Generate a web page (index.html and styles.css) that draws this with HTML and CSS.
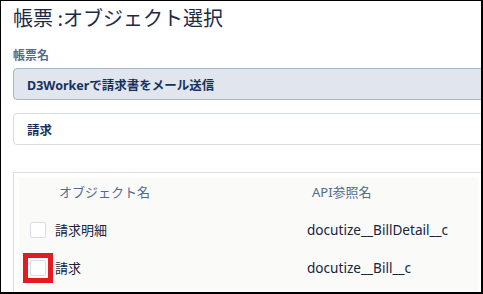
FILE: index.html
```html
<!DOCTYPE html>
<html lang="ja">
<head>
<meta charset="utf-8">
<link rel="stylesheet" href="styles.css">
</head>
<body>
<div class="frame">
  <h1 class="title">帳票 :オブジェクト選択</h1>
  <div class="field">
    <div class="label">帳票名</div>
    <div class="input input-disabled">D3Workerで請求書をメール送信</div>
  </div>
  <div class="input input-search">請求</div>
  <div class="table-wrap">
    <div class="table">
      <div class="row head">
        <div class="cell check"></div>
        <div class="cell name">オブジェクト名</div>
        <div class="cell api">API参照名</div>
      </div>
      <div class="row">
        <div class="cell check"><span class="checkbox"></span></div>
        <div class="cell name">請求明細</div>
        <div class="cell api value">docutize__BillDetail__c</div>
      </div>
      <div class="row">
        <div class="cell check"><span class="highlight"><span class="checkbox"></span></span></div>
        <div class="cell name">請求</div>
        <div class="cell api value">docutize__Bill__c</div>
      </div>
    </div>
  </div>
</div>
</body>
</html>
```

FILE: styles.css
```css
* { box-sizing: border-box; }
html, body { margin: 0; padding: 0; background: #fff; }
body {
  font-family: "Noto Sans", "Noto Sans CJK JP", sans-serif;
  color: #16325c;
}
.frame {
  width: 483px;
  height: 294px;
  border-style: solid;
  border-color: #000;
  border-width: 1px 2px 2px 1px;
  overflow: hidden;
  padding-left: 12px;
  background: #fff;
}
.title {
  margin: 5px 0 0 0;
  font-size: 20px;
  line-height: 24px;
  font-weight: 400;
  color: #1c2b45;
  font-family: "Noto Sans CJK JP", sans-serif;
}
.field { margin-top: 17px; }
.label {
  font-size: 12px;
  line-height: 16px;
  font-weight: 700;
  color: #54698d;
  font-family: "Noto Sans CJK JP", sans-serif;
}
.input {
  margin-right: -20px;
  height: 32px;
  border: 1px solid #d8dde6;
  border-radius: 4px;
  padding-left: 13px;
  display: flex;
  align-items: center;
  font-size: 12.5px;
  font-weight: 700;
  color: #16325c;
}
.input-disabled {
  margin-top: 5px;
  background: #e0e5ee;
  border-color: #a8b7c7;
}
.input-search {
  margin-top: 13px;
  background: #fff;
}
.table-wrap {
  margin-top: 27px;
  margin-right: -20px;
  border-left: 1px solid #d8dde6;
  border-top: 1px solid #d8dde6;
  padding: 5px 23px 6px 5px;
}
.table {
  background: #fafaf9;
  height: 120px;
}
.row {
  display: grid;
  grid-template-columns: 36px 252px 1fr;
  height: 38px;
  align-items: center;
  font-size: 13px;
  color: #16253f;
}
.row.head {
  height: 33px;
  align-items: start;
  padding-top: 5px;
  color: #54698d;
}
.cell { white-space: nowrap; line-height: 18px; }
.value { font-size: 13.6px; }
.head .name { padding-left: 4px; }
.head .api { padding-left: 5px; }
.check { padding-left: 11px; display: flex; align-items: center; }
.checkbox {
  display: block;
  width: 16px;
  height: 16px;
  background: #fff;
  border: 1px solid #d8dde6;
  border-radius: 2px;
}
.highlight {
  display: block;
  margin-left: -7px;
  padding: 2px;
  border: 5px solid #e31c23;
}
```
